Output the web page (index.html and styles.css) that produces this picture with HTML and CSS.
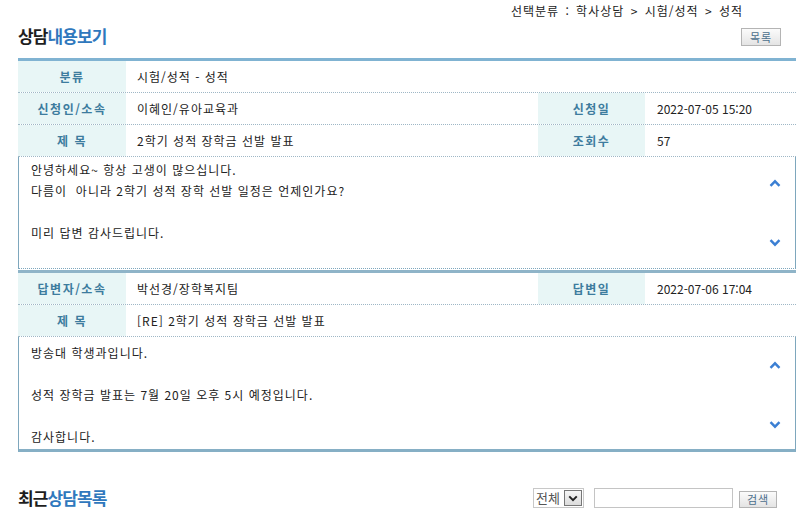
FILE: index.html
```html
<!DOCTYPE html>
<html lang="ko">
<head>
<meta charset="utf-8">
<title>상담내용보기</title>
<link rel="stylesheet" href="styles.css">
</head>
<body>
<div class="page">
  <div class="crumb">선택분류 : 학사상담 &gt; 시험/성적 &gt; 성적</div>
  <div class="head">
    <h2 class="title">상담<span class="blue">내용보기</span></h2>
    <button class="btn btn-list">목록</button>
  </div>

  <div class="section first">
    <div class="row">
      <div class="lab">분류</div>
      <div class="val span3">시험/성적 - 성적</div>
    </div>
    <div class="row">
      <div class="lab">신청인/소속</div>
      <div class="val">이혜인/유아교육과</div>
      <div class="lab">신청일</div>
      <div class="val num">2022-07-05 15:20</div>
    </div>
    <div class="row">
      <div class="lab">제 목</div>
      <div class="val">2학기 성적 장학금 선발 발표</div>
      <div class="lab">조회수</div>
      <div class="val num">57</div>
    </div>
    <div class="box">
      <p>안녕하세요~ 항상 고생이 많으십니다.</p>
      <p>다름이&nbsp; 아니라 2학기 성적 장학 선발 일정은 언제인가요?</p>
      <p>&nbsp;</p>
      <p>미리 답변 감사드립니다.</p>
      <svg class="chev up" width="12" height="8" viewBox="0 0 12 8"><polyline points="1.5,6.8 6,2.3 10.5,6.8" fill="none" stroke="#3b7fd3" stroke-width="2.4"/></svg>
      <svg class="chev down" width="12" height="8" viewBox="0 0 12 8"><polyline points="1.5,1.2 6,5.7 10.5,1.2" fill="none" stroke="#3b7fd3" stroke-width="2.4"/></svg>
    </div>
  </div>

  <div class="section answer">
    <div class="row">
      <div class="lab">답변자/소속</div>
      <div class="val">박선경/장학복지팀</div>
      <div class="lab">답변일</div>
      <div class="val num">2022-07-06 17:04</div>
    </div>
    <div class="row">
      <div class="lab">제 목</div>
      <div class="val span3">[RE] 2학기 성적 장학금 선발 발표</div>
    </div>
    <div class="box last">
      <p>방송대 학생과입니다.</p>
      <p>&nbsp;</p>
      <p>성적 장학금 발표는 7월 20일 오후 5시 예정입니다.</p>
      <p>&nbsp;</p>
      <p>감사합니다.</p>
      <svg class="chev up" width="12" height="8" viewBox="0 0 12 8"><polyline points="1.5,6.8 6,2.3 10.5,6.8" fill="none" stroke="#3b7fd3" stroke-width="2.4"/></svg>
      <svg class="chev down" width="12" height="8" viewBox="0 0 12 8"><polyline points="1.5,1.2 6,5.7 10.5,1.2" fill="none" stroke="#3b7fd3" stroke-width="2.4"/></svg>
    </div>
  </div>

  <div class="foot">
    <h2 class="title">최근<span class="blue">상담목록</span></h2>
    <div class="search">
      <div class="sel"><span class="sel-text">전체</span><span class="sel-btn"><svg width="12" height="8" viewBox="0 0 12 8"><polyline points="1.5,1.5 6,6 10.5,1.5" fill="none" stroke="#222" stroke-width="2.4"/></svg></span></div>
      <input class="inp" type="text">
      <button class="btn btn-search">검색</button>
    </div>
  </div>
</div>
</body>
</html>
```

FILE: styles.css
```css
html, body {
  margin: 0;
  padding: 0;
  background: #fff;
}
body {
  font-family: "Noto Sans CJK KR", "Noto Sans", sans-serif;
  font-size: 12px;
  color: #222;
}
.page {
  width: 778px;
  padding-left: 18px;
}
.crumb {
  height: 22px;
  line-height: 22px;
  text-align: right;
  padding-right: 53px;
  color: #222;
  letter-spacing: 1px;
  word-spacing: 2px;
}
.head {
  display: flex;
  justify-content: space-between;
  align-items: flex-start;
  height: 32px;
  padding-top: 4px;
  padding-right: 15px;
  border-bottom: 3px solid #80b3d2;
}
.title {
  margin: 0;
  font-size: 17px;
  font-weight: bold;
  letter-spacing: -0.9px;
  color: #1e1e1e;
  line-height: 20px;
}
.blue {
  color: #2f78bd;
}
.btn {
  font-family: "Noto Sans CJK KR", sans-serif;
  font-size: 11px;
  color: #4c6f8c;
  background: linear-gradient(#fbfbfb, #e4e4e4);
  border: 1px solid #b4b4b4;
  padding: 0;
  letter-spacing: 1px;
  box-sizing: border-box;
}
.btn-list {
  width: 40px;
  height: 18px;
  line-height: 16px;
  margin-top: 2px;
}
.row {
  display: grid;
  grid-template-columns: 108px 412px 107px 151px;
  height: 31px;
  border-bottom: 1px dotted #9fb7c6;
}
.lab {
  background: #e8f6f6;
  color: #3d7c9e;
  font-weight: bold;
  font-size: 12px;
  letter-spacing: 1.5px;
  text-align: center;
  line-height: 31px;
}
.val {
  line-height: 31px;
  padding-left: 11px;
  letter-spacing: 1px;
  word-spacing: 0;
}
.val.num {
  letter-spacing: 0;
  word-spacing: 0;
  padding-left: 12px;
}
.val.span3 {
  grid-column: span 3;
}
.box {
  position: relative;
  height: 107px;
  padding: 2px 12px 2px 12px;
  border-left: 1px solid #7ea7bd;
  border-right: 1px solid #7ea7bd;
  border-bottom: 1px dotted #7ea7bd;
  line-height: 21px;
  letter-spacing: 1px;
  word-spacing: 0;
}
.box p {
  margin: 0;
}
.box.last {
  height: 105px;
  padding-top: 5px;
  border-bottom: 3px solid #86afc5;
}
.answer {
  border-top: 3px solid #8fb4c8;
  margin-top: 1px;
}
.chev {
  position: absolute;
  right: 14px;
}
.chev.up {
  top: 22px;
}
.chev.down {
  top: 82px;
}
.box.last .chev.up {
  top: 24px;
}
.box.last .chev.down {
  top: 84px;
}
.foot {
  display: flex;
  justify-content: space-between;
  align-items: center;
  margin-top: 36px;
  padding-right: 19px;
}
.search {
  display: flex;
  align-items: center;
  gap: 10px;
}
.sel {
  display: flex;
  align-items: center;
  height: 20px;
  width: 51px;
  box-sizing: border-box;
  border: 1px solid #c8c8c8;
  padding-left: 2px;
  color: #555;
  font-size: 13px;
}
.sel-text {
  flex: 1;
  line-height: 18px;
}
.sel-btn {
  width: 18px;
  height: 16px;
  margin-right: 1px;
  border: 1px solid #777;
  box-sizing: border-box;
  background: linear-gradient(#f6f6f6, #dcdcdc);
  display: flex;
  align-items: center;
  justify-content: center;
}
.sel-btn svg {
  width: 10px;
  height: 7px;
}
.inp {
  width: 139px;
  height: 20px;
  box-sizing: border-box;
  border: 1px solid #c4c4c4;
  margin: 0;
  padding: 0;
}
.btn-search {
  width: 38px;
  height: 17px;
  line-height: 15px;
  margin-left: -4px;
  margin-top: 3px;
}
```
